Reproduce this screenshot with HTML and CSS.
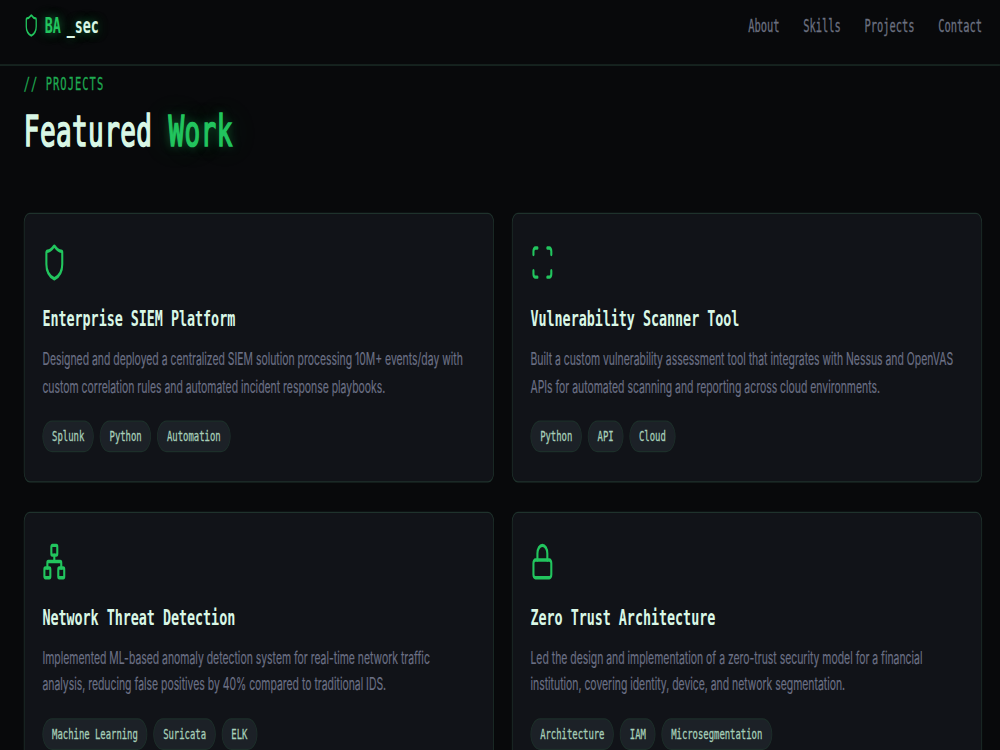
FILE: index.html
```html
<!DOCTYPE html>
<html lang="en">
<head>
  <meta charset="UTF-8">
  <title>BA_sec - Projects</title>
  <link rel="stylesheet" href="styles.css">
</head>
<body>
  <div class="page">
    <!-- Navigation Bar -->
    <nav class="navbar">
      <a href="#" class="logo">
        <svg class="logo-icon" viewBox="0 0 24 24"><path d="M20 13c0 5-3.5 7.5-7.66 8.95a1 1 0 0 1-.67-.01C7.5 20.5 4 18 4 13V6a1 1 0 0 1 1-1c2 0 4.5-1.2 6.24-2.72a1.17 1.17 0 0 1 1.52 0C14.51 3.81 17 5 19 5a1 1 0 0 1 1 1z"/></svg>
        <span class="green">BA</span>
        <span>_sec</span>
      </a>
      <div class="nav-links">
        <a href="#about">About</a>
        <a href="#skills">Skills</a>
        <a href="#projects">Projects</a>
        <a href="#contact">Contact</a>
      </div>
    </nav>

    <section class="projects" id="projects">
      <p class="section-label">// PROJECTS</p>
      <h2>Featured <span class="green glow">Work</span></h2>

      <div class="project-grid">
        <div class="project-card">
          <svg class="card-icon" viewBox="0 0 24 24"><path d="M20 13c0 5-3.5 7.5-7.66 8.95a1 1 0 0 1-.67-.01C7.5 20.5 4 18 4 13V6a1 1 0 0 1 1-1c2 0 4.5-1.2 6.24-2.72a1.17 1.17 0 0 1 1.52 0C14.51 3.81 17 5 19 5a1 1 0 0 1 1 1z"/></svg>
          <h3>Enterprise SIEM Platform</h3>
          <p>Designed and deployed a centralized SIEM solution processing 10M+ events/day with<br>custom correlation rules and automated incident response playbooks.</p>
          <div class="tags">
            <span>Splunk</span>
            <span>Python</span>
            <span>Automation</span>
          </div>
        </div>

        <div class="project-card">
          <svg class="card-icon" viewBox="0 0 24 24"><path d="M3 7V5a2 2 0 0 1 2-2h2M17 3h2a2 2 0 0 1 2 2v2M21 17v2a2 2 0 0 1-2 2h-2M7 21H5a2 2 0 0 1-2-2v-2"/></svg>
          <h3>Vulnerability Scanner Tool</h3>
          <p>Built a custom vulnerability assessment tool that integrates with Nessus and OpenVAS<br>APIs for automated scanning and reporting across cloud environments.</p>
          <div class="tags">
            <span>Python</span>
            <span>API</span>
            <span>Cloud</span>
          </div>
        </div>

        <div class="project-card">
          <svg class="card-icon" viewBox="0 0 24 24"><rect x="16" y="16" width="6" height="6" rx="1"/><rect x="2" y="16" width="6" height="6" rx="1"/><rect x="9" y="2" width="6" height="6" rx="1"/><path d="M5 16v-3a1 1 0 0 1 1-1h12a1 1 0 0 1 1 1v3M12 12V8"/></svg>
          <h3>Network Threat Detection</h3>
          <p>Implemented ML-based anomaly detection system for real-time network traffic<br>analysis, reducing false positives by 40% compared to traditional IDS.</p>
          <div class="tags">
            <span>Machine Learning</span>
            <span>Suricata</span>
            <span>ELK</span>
          </div>
        </div>

        <div class="project-card">
          <svg class="card-icon" viewBox="0 0 24 24"><rect x="3" y="11" width="18" height="11" rx="2"/><path d="M7 11V7a5 5 0 0 1 10 0v4"/></svg>
          <h3>Zero Trust Architecture</h3>
          <p>Led the design and implementation of a zero-trust security model for a financial<br>institution, covering identity, device, and network segmentation.</p>
          <div class="tags">
            <span>Architecture</span>
            <span>IAM</span>
            <span>Microsegmentation</span>
          </div>
        </div>
      </div>
    </section>
  </div>
</body>
</html>
```
FILE: styles.css
```css
* {
  box-sizing: border-box;
  margin: 0;
  padding: 0;
}

html, body {
  width: 1000px;
  height: 750px;
  overflow: hidden;
}

body {
  background-color: #08090b;
  color: #d9f7e6;
  font-family: Inter, sans-serif;
}

.page {
  width: 1344px;
  height: 617px;
  overflow: hidden;
  transform: scale(0.744, 1.2155);
  transform-origin: 0 0;
}

a {
  color: inherit;
  text-decoration: none;
}

svg {
  fill: none;
  stroke: #22c55e;
  stroke-width: 2.1;
  stroke-linecap: round;
  stroke-linejoin: round;
}

.green {
  color: #22c55e;
}

.navbar {
  display: flex;
  justify-content: space-between;
  align-items: center;
  height: 54px;
  padding: 0 24px 11px 32px;
  border-bottom: 1px solid #1f322c;
  font-family: "DejaVu Sans Mono", monospace;
}

.logo {
  display: flex;
  align-items: center;
  gap: 8px;
  font-size: 18px;
  font-weight: bold;
  line-height: 28px;
  letter-spacing: -0.04px;
  text-shadow: 0 0 10px rgba(34, 197, 94, 0.5), 0 0 20px rgba(34, 197, 94, 0.2);
}

.logo-icon {
  width: 20px;
  height: 20px;
}

.nav-links {
  display: flex;
  gap: 32px;
  font-size: 14px;
  line-height: 20px;
  letter-spacing: -0.03px;
  color: #6b7080;
  -webkit-text-stroke: 0.25px;
}

.projects {
  padding: 5px 24px 40px 32px;
}

.section-label {
  font-family: "DejaVu Sans Mono", monospace;
  font-size: 14px;
  line-height: 20px;
  letter-spacing: 1.4px;
  color: #1fab52;
  margin-bottom: 9px;
  -webkit-text-stroke: 0.25px;
}

h2 {
  font-family: "DejaVu Sans Mono", monospace;
  font-size: 35px;
  font-weight: normal;
  line-height: 40px;
  letter-spacing: 0.53px;
  margin-bottom: 47px;
  -webkit-text-stroke: 1.4px;
}

.glow {
  text-shadow: 0 0 10px rgba(34, 197, 94, 0.5), 0 0 30px rgba(34, 197, 94, 0.3);
}

.project-grid {
  display: grid;
  grid-template-columns: 1fr 1fr;
  gap: 24px;
}

.project-card {
  background-color: #111318;
  border: 1px solid #1f322c;
  border-radius: 8px;
  padding: 24px;
}

.card-icon {
  display: block;
  width: 32px;
  height: 32px;
  margin-bottom: 16px;
}

.project-card h3 {
  font-family: "DejaVu Sans Mono", monospace;
  font-size: 18px;
  line-height: 28px;
  letter-spacing: -0.04px;
  margin-bottom: 8px;
}

.project-card p {
  font-size: 14px;
  line-height: 22.75px;
  color: #6b7085;
  margin-bottom: 16px;
  white-space: nowrap;
  -webkit-text-stroke: 0.15px;
}

.tags {
  display: flex;
  gap: 8px;
}

.tags span {
  font-family: "DejaVu Sans Mono", monospace;
  font-size: 12px;
  line-height: 16px;
  letter-spacing: -0.02px;
  padding: 4px 12px;
  color: #a7cfb9;
  background-color: #1c2127;
  border: 1px solid #1d2f2a;
  border-radius: 13px;
  -webkit-text-stroke: 0.25px;
}
```
